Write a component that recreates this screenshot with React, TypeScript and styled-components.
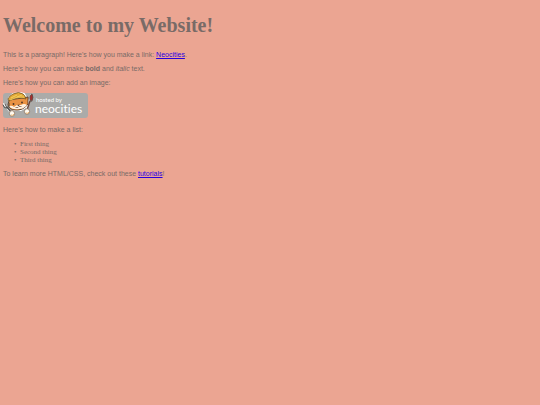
import React from 'react';
import styled, { createGlobalStyle } from 'styled-components';

const GlobalStyle = createGlobalStyle`
  body {
    margin: 0;
    background: #eba592;
    color: #796b67;
    font-family: "Liberation Serif", serif;
    font-size: 7px;
    line-height: 8px;
  }
`;

const Page = styled.main`
  padding: 14px 3px;
`;

const Title = styled.h1`
  margin: 0 0 14px;
  font-size: 20px;
  line-height: 23px;
  font-weight: bold;
`;

const Paragraph = styled.p`
  margin: 0 0 6px;
  font-family: "Liberation Sans", sans-serif;
`;

const Link = styled.a`
  color: #2a00e0;
  text-decoration: underline;
`;

const BadgeLink = styled.a`
  display: block;
  width: 85px;
  margin-bottom: 8px;
`;

const Badge = styled.svg`
  display: block;
  width: 100%;
  height: 25px;
  overflow: visible;
`;

const BadgeText = styled.text`
  fill: #fff;
  font-family: Lato, sans-serif;
  font-variant-ligatures: none;
`;

const List = styled.ul`
  margin: 6px 0;
  padding-left: 17px;
  list-style-type: "•\\00a0\\00a0";
`;

function NeocitiesBadge() {
  return (
    <Badge viewBox="0 0 85 25" role="img" aria-label="Hosted by Neocities">
      <rect width="85" height="25" rx="3" fill="#ababa9" />
      <g stroke="#fff" strokeWidth="2" strokeLinecap="round" strokeLinejoin="round" fill="#fff">
        <path d="M6 5 10 1 17 0 21 1 25 8 23 14 18 17 11 17 6 13Z" />
        <path d="m1 11 8 10M28 2l-5 17" />
      </g>
      <path d="M6 7 5 12q2 5 7 5 8 1 13-6l0-7-5 1-8 1Z" fill="#e99243" stroke="#543826" strokeWidth=".9" />
      <path d="M6 13q3-1 5 1l3-2 4 0q3-2 6 0-3 4-8 4-7 1-10-3Z" fill="#fff1df" />
      <path d="M5 6Q6 3 10 1q6-3 10 0 2 1 3 5-9-3-17 2Z" fill="#e3aa38" stroke="#735525" strokeWidth=".8" />
      <path d="m8 5 6-3M14 4l5-2M7 7q7-4 14-3" stroke="#f8d665" strokeWidth=".8" fill="none" />
      <ellipse cx="10.5" cy="11" rx=".9" ry="1.1" fill="#493225" />
      <ellipse cx="19" cy="9.5" rx=".9" ry="1.1" fill="#493225" />
      <path d="m14 12 2.8-.5-1 1.8Z" fill="#583b30" />
      <path d="m12.5 14.5 2.5 0 1-1 2.5 0" fill="none" stroke="#735347" strokeWidth=".7" />
      <g stroke="#51504d" strokeLinecap="round">
        <path d="m4 14 4 5" strokeWidth="1.5" />
        <path d="M0 12q1 4 4 3 3-1 2-5M2 11l2 4" fill="none" strokeWidth="1" />
        <path d="m27 8-3 9" stroke="#6b4235" strokeWidth="1.4" />
        <path d="M27 7q-1-5 2-6 2 3 0 7Z" fill="#a92d2c" strokeWidth=".8" />
      </g>
      <ellipse cx="9" cy="20.5" rx="2.6" ry="2.9" fill="#fffaf0" stroke="#8b725d" strokeWidth=".8" />
      <ellipse cx="24" cy="18.5" rx="2.6" ry="2.8" fill="#fffaf0" stroke="#8b725d" strokeWidth=".8" />
      <path d="M8 22q2 1 3-1M23 20q2 1 3-1" fill="none" stroke="#edaa56" strokeWidth=".8" />
      <BadgeText x="33" y="9" fontSize="6">hosted by</BadgeText>
      <BadgeText x="32" y="20" fontSize="12">neocities</BadgeText>
    </Badge>
  );
}

export default function App() {
  return (
    <>
      <GlobalStyle />
      <Page>
        <Title>Welcome to my Website!</Title>
        <Paragraph>
          This is a paragraph! Here's how you make a link:{' '}
          <Link href="https://neocities.org">Neocities</Link>.
        </Paragraph>
        <Paragraph>
          Here's how you can make <strong>bold</strong> and <em>italic</em> text.
        </Paragraph>
        <Paragraph>Here's how you can add an image:</Paragraph>
        <BadgeLink href="https://neocities.org">
          <NeocitiesBadge />
        </BadgeLink>
        <Paragraph>Here's how to make a list:</Paragraph>
        <List>
          <li>First thing</li>
          <li>Second thing</li>
          <li>Third thing</li>
        </List>
        <Paragraph>
          To learn more HTML/CSS, check out these{' '}
          <Link href="https://neocities.org/tutorials">tutorials</Link>!
        </Paragraph>
      </Page>
    </>
  );
}
